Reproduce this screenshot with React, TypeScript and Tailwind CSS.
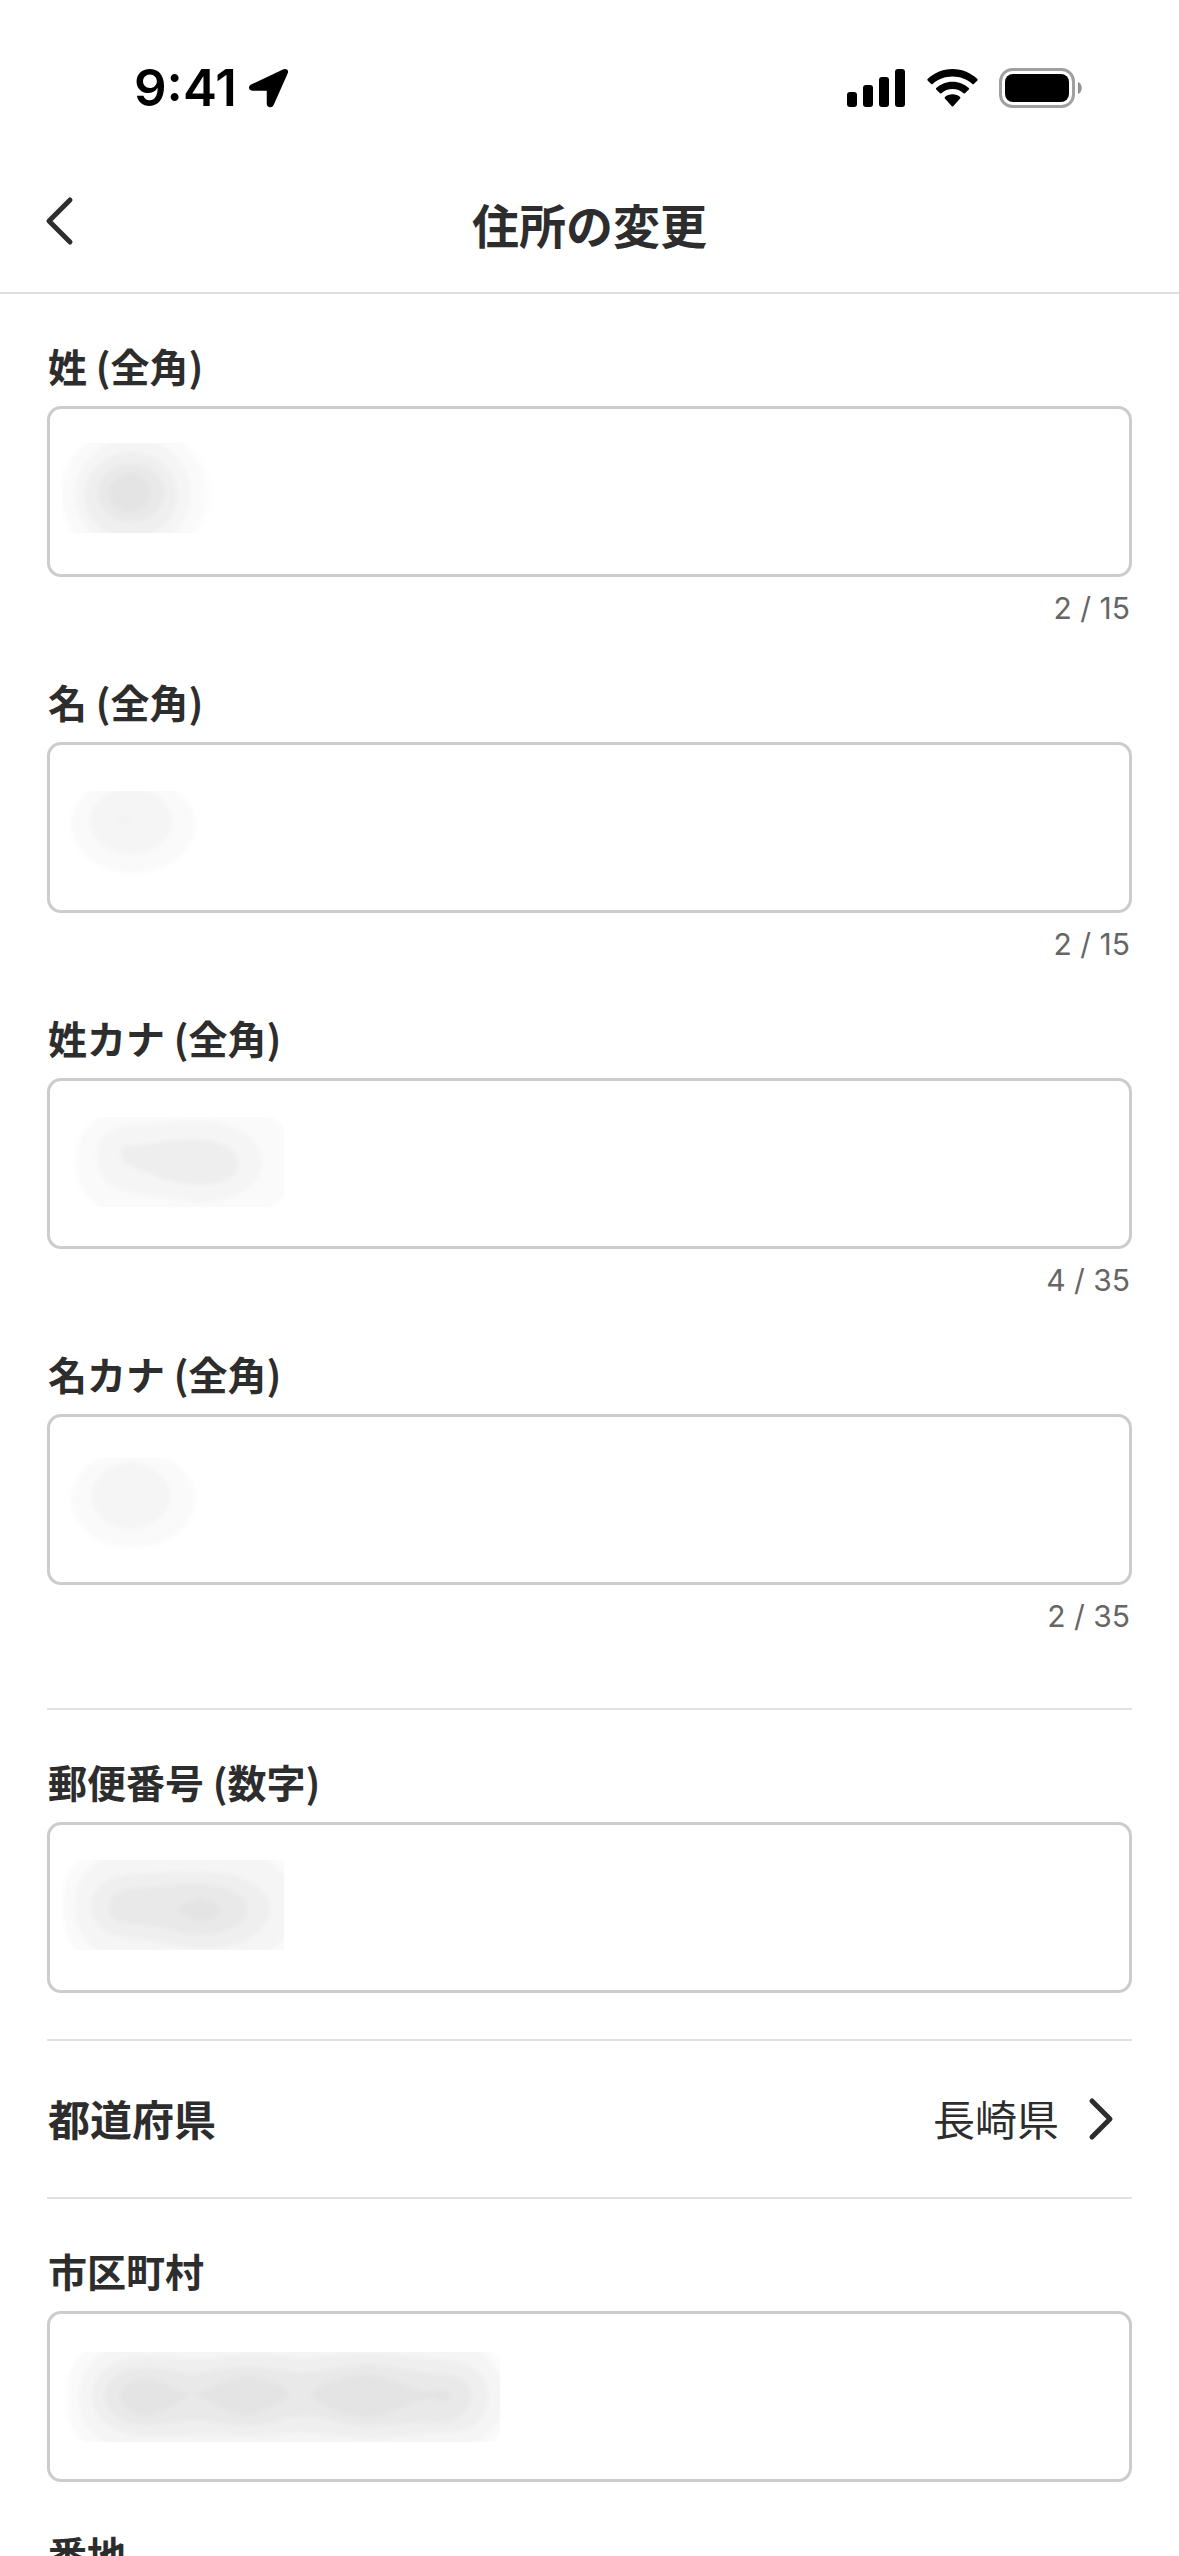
import * as React from "react";

const fieldFont = "font-['Noto_Sans_CJK_JP',sans-serif]";

// Each smudge is drawn in the coordinates of its own text box
const SmudgeLastName = () => (
  <svg x="15" y="37" width="160" height="90" viewBox="15 37 160 90">
    <g className="blur-[2px]">
      <ellipse cx="88" cy="88" rx="76" ry="72" fill="#fdfdfd" />
      <ellipse cx="87" cy="88" rx="72" ry="67" fill="#fafafa" />
      <ellipse cx="86" cy="88" rx="58" ry="56" fill="#f5f5f5" />
      <ellipse cx="84" cy="89" rx="46" ry="43" fill="#efefef" />
      <ellipse cx="84" cy="87" rx="33" ry="29" fill="#e9e9e9" />
      <ellipse cx="83" cy="87" rx="21" ry="19" fill="#e4e4e4" />
    </g>
  </svg>
);

const SmudgeFirstName = () => (
  <svg x="15" y="49" width="160" height="90" viewBox="15 49 160 90">
    <g className="blur-[2px]">
      <ellipse cx="86" cy="83" rx="62" ry="48" fill="#fafafa" />
      <ellipse cx="84" cy="79" rx="41" ry="33" fill="#f5f5f5" />
      <ellipse cx="77" cy="78" rx="8" ry="3" fill="#f2f2f2" />
    </g>
  </svg>
);

const SmudgeLastKana = () => (
  <svg x="15" y="39" width="222" height="90" viewBox="15 39 222 90">
    <g className="blur-[2px]">
      <rect x="29" y="32" width="218" height="104" rx="48" fill="#fafafa" />
      <path d="M50 79C50 58 66 46 96 46C118 46 134 42 155 43C190 45 215 62 215 84C215 108 186 124 154 124C128 122 112 118 88 115C64 112 50 100 50 79Z" fill="#f5f5f5" />
      <path d="M74 75C74 66 84 68 94 67C114 64 130 61 154 62C176 64 191 72 191 86C191 98 174 107 158 107C138 107 120 103 106 97C92 91 74 88 74 75Z" fill="#eeeeee" />
    </g>
  </svg>
);

const SmudgeFirstKana = () => (
  <svg x="15" y="44" width="160" height="90" viewBox="15 44 160 90">
    <g className="blur-[2px]">
      <ellipse cx="86" cy="85" rx="62" ry="49" fill="#fafafa" />
      <ellipse cx="84" cy="82" rx="39" ry="33" fill="#f5f5f5" />
    </g>
  </svg>
);

const SmudgePostal = () => (
  <svg x="15" y="38" width="222" height="90" viewBox="15 38 222 90">
    <g className="blur-[2px]">
      <rect x="16" y="24" width="240" height="120" rx="50" fill="#fafafa" />
      <rect x="28" y="30" width="218" height="108" rx="52" fill="#f5f5f5" />
      <path d="M45 83C45 62 64 52 98 52C122 50 140 49 160 50C196 51 223 66 223 88C223 110 192 127 156 127C130 126 118 119 92 117C62 115 45 106 45 83Z" fill="#efefef" />
      <path d="M62 85C62 70 74 67 94 66C118 64 136 61 158 62C184 65 200 74 200 88C200 102 180 112 154 112C132 112 120 105 98 103C76 101 62 102 62 85Z" fill="#e9e9e9" />
      <path d="M129 86C138 79 146 79 154 75C162 79 174 81 174 88C172 95 162 99 153 99C144 98 134 94 129 86Z" fill="#e4e4e4" />
    </g>
  </svg>
);

const SmudgeCity = () => (
  <svg x="15" y="41" width="438" height="90" viewBox="15 41 438 90">
    <g className="blur-[2px]">
      <rect x="20" y="28" width="442" height="116" rx="50" fill="#fafafa" />
      <rect x="32" y="34" width="424" height="104" rx="50" fill="#f5f5f5" />
      <path d="M46 85C46 60 66 46 98 46C130 46 146 50 172 47C200 42 216 42 246 47C276 48 292 42 322 42C352 42 366 48 398 48C424 50 441 64 441 86C441 108 424 122 396 122C366 122 352 127 322 127C292 126 276 121 246 122C220 124 208 126 184 124C152 122 132 126 100 125C66 124 46 110 46 85Z" fill="#efefef" />
      <path d="M58 85C58 68 74 58 98 57C124 57 132 64 156 62C178 58 190 55 204 56C226 57 238 62 256 62C280 62 296 53 322 53C350 54 360 62 384 62C410 62 424 70 424 86C424 103 408 111 386 111C362 110 350 115 322 115C296 115 280 104 256 105C234 107 218 115 198 115C176 114 156 107 138 109C124 112 112 114 100 114C74 113 58 102 58 85Z" fill="#e9e9e9" />
      <path d="M73 84C74 74 86 68 100 68C116 68 124 77 142 83C128 94 116 103 100 104C84 104 74 96 73 84Z" fill="#e4e4e4" />
      <path d="M148 83C166 76 178 67 200 66C220 67 240 74 242 83C240 90 220 101 200 104C178 103 168 92 148 83Z" fill="#e4e4e4" />
      <path d="M264 82C270 73 296 64 322 64C344 65 352 74 374 79C384 84 396 74 404 82C404 90 394 94 386 87C360 90 346 105 320 106C294 105 270 94 264 82Z" fill="#e4e4e4" />
    </g>
  </svg>
);

const Field = ({ id, label, count, children }: { id: string; label: string; count?: string; children?: React.ReactNode }) => (
  <div className="flex flex-col">
    <label htmlFor={id} className="mb-4 pl-px text-[39px] leading-[50px] font-bold text-[#2d2d2d]">
      {label}
    </label>
    <div className="relative flex">
      <input
        id={id}
        type="text"
        className="h-[171px] w-full rounded-[14px] border-[3px] border-[#cccccc] bg-white px-10 text-[42px] text-[#2d2d2d] outline-none"
      />
      {children && (
        <svg className="pointer-events-none absolute top-0 left-0" width="500" height="171" aria-hidden="true">
          {children}
        </svg>
      )}
    </div>
    {count && (
      <p className="mt-[15px] pr-[2px] text-right font-['Inter',sans-serif] text-[30px] leading-[32px] text-[#666666]">{count}</p>
    )}
  </div>
);

const StatusBar = () => (
  <div className="flex h-[174px] items-start justify-between pt-[60px] pr-[96px] pl-[134px]">
    <div className="flex h-[56px] items-center gap-3">
      <span className="font-['Inter',sans-serif] text-[51px] leading-[56px] font-semibold text-black">9:41</span>
      <svg width="40" height="40" viewBox="0 0 40 40" aria-hidden="true">
        <path d="M3 17.5L35 2.5C37 1.700 38.500 3 37.500 5L23.500 36.500C22.500 38.800 19 38.500 19 35.500V21.500H4C0.500 21.500 0.500 18.500 3 17.500Z" fill="#000" stroke="#000" strokeWidth="2.500" strokeLinejoin="round" />
      </svg>
    </div>
    <div className="flex h-[56px] items-center gap-[21px]">
      <svg width="59" height="38" viewBox="0 0 59 38" aria-hidden="true">
        <rect x="0" y="23" width="10" height="15" rx="3" />
        <rect x="16" y="16" width="10" height="22" rx="3" />
        <rect x="32" y="8" width="10" height="30" rx="3" />
        <rect x="48" y="0" width="10" height="38" rx="3" />
      </svg>
      <svg width="51" height="38" viewBox="0 0 51 38" aria-hidden="true">
        <path d="M25.500 0C35.500 0 44 4 50.400 10Q51 10.700 50.400 11.400L46.800 15Q46.100 15.600 45.400 15C40 10.200 33 7.500 25.500 7.500S11 10.200 5.600 15Q4.900 15.600 4.200 15L0.600 11.400Q0 10.700 0.600 10C7 4 15.500 0 25.500 0Z" />
        <path d="M25.500 12.700C32 12.700 37.600 15.200 41.800 19Q42.500 19.700 41.800 20.400L38 24.200Q37.300 24.900 36.600 24.200C33.600 21.500 29.700 20 25.500 20S17.400 21.500 14.400 24.200Q13.700 24.900 13 24.200L9.200 20.400Q8.500 19.700 9.200 19C13.400 15.200 19 12.700 25.500 12.700Z" />
        <path d="M25.500 25.300C28.500 25.300 31.200 26.300 33.100 28Q33.800 28.700 33.100 29.500L26.200 37.200Q25.500 37.900 24.800 37.200L17.900 29.500Q17.200 28.700 17.900 28C19.800 26.300 22.500 25.300 25.500 25.300Z" />
      </svg>
      <svg width="84" height="40" viewBox="0 0 84 40" aria-hidden="true">
        <rect x="1.500" y="1.500" width="73" height="37" rx="12" fill="none" stroke="#a0a0a0" strokeWidth="3" />
        <rect x="6" y="6" width="64" height="28" rx="8" />
        <path d="M79 14C84 16 84 24 79 26Z" fill="#8f8f8f" />
      </svg>
    </div>
  </div>
);

const Divider = () => <hr className="h-[2px] border-0 bg-[#e1e1e1]" />;

export default function App() {
  return (
    <div className={`flex h-screen flex-col bg-white ${fieldFont}`} lang="ja">
      <header className="shrink-0 border-b-2 border-[#dedede]">
        <StatusBar />
        <div className="grid h-[118px] grid-cols-[1fr_auto_1fr] items-start px-[44px]">
          <button type="button" aria-label="戻る" className="w-[50px] pt-[20px]">
            <svg width="32" height="54" viewBox="0 0 32 54" fill="none" stroke="#2d2d2d" strokeWidth="5" strokeLinecap="round" strokeLinejoin="round">
              <path d="M26 6L5 27L26 48" />
            </svg>
          </button>
          <h1 className="pt-[18px] text-[47px] leading-[64px] font-bold text-[#2d2d2d]">住所の変更</h1>
        </div>
      </header>

      <main className="flex-1 overflow-y-auto px-[47px] pt-[46px] pb-12 [scrollbar-width:none]">
        <div className="flex flex-col gap-[52px]">
          <Field id="last-name" label="姓 (全角)" count="2 / 15"><SmudgeLastName /></Field>
          <Field id="first-name" label="名 (全角)" count="2 / 15"><SmudgeFirstName /></Field>
          <Field id="last-kana" label="姓カナ (全角)" count="4 / 35"><SmudgeLastKana /></Field>
          <Field id="first-kana" label="名カナ (全角)" count="2 / 35"><SmudgeFirstKana /></Field>
        </div>

        <div className="mt-[76px]">
          <Divider />
          <div className="py-[46px]">
            <Field id="postal" label="郵便番号 (数字)"><SmudgePostal /></Field>
          </div>
          <Divider />
          <button type="button" className="flex h-[156px] w-full items-center text-[42px] text-[#2d2d2d]">
            <span className="pb-1 pl-px font-bold">都道府県</span>
            <span className="ml-auto pb-1 font-normal">長崎県</span>
            <svg className="mr-[15px] ml-[26px]" width="32" height="44" viewBox="0 0 32 44" fill="none" stroke="#2d2d2d" strokeWidth="5" strokeLinecap="round" strokeLinejoin="round" aria-hidden="true">
              <path d="M7 4L25 22L7 40" />
            </svg>
          </button>
          <Divider />
          <div className="flex flex-col gap-[46px] pt-[46px]">
            <Field id="city" label="市区町村"><SmudgeCity /></Field>
            <Field id="street" label="番地" />
          </div>
        </div>
      </main>
    </div>
  );
}
